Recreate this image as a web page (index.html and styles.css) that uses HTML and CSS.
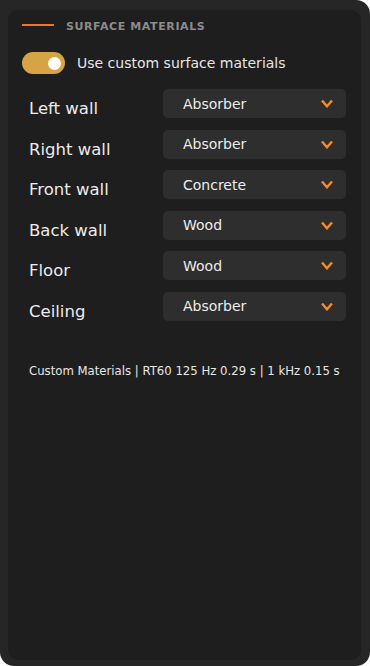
FILE: index.html
```html
<!DOCTYPE html>
<html lang="en">
<head>
    <meta charset="UTF-8">
    <meta name="viewport" content="width=device-width, initial-scale=1.0">
    <title>Surface Materials</title>
    <link rel="stylesheet" href="styles.css">
</head>
<body>
    <div class="app-frame">
        <div class="panel">
            <div class="panel-header">
                <span class="header-line"></span>
                <h2 class="header-title">SURFACE MATERIALS</h2>
            </div>

            <label class="toggle-row">
                <span class="toggle"><span class="toggle-knob"></span></span>
                <span class="toggle-text">Use custom surface materials</span>
            </label>

            <div class="material-list">
                <div class="material-row">
                    <span class="material-label">Left wall</span>
                    <div class="select-box"><span>Absorber</span><svg class="chevron" viewBox="0 0 12 9"><path d="M1 1.5 L6 7.2 L11 1.5"/></svg></div>
                </div>
                <div class="material-row">
                    <span class="material-label">Right wall</span>
                    <div class="select-box"><span>Absorber</span><svg class="chevron" viewBox="0 0 12 9"><path d="M1 1.5 L6 7.2 L11 1.5"/></svg></div>
                </div>
                <div class="material-row">
                    <span class="material-label">Front wall</span>
                    <div class="select-box"><span>Concrete</span><svg class="chevron" viewBox="0 0 12 9"><path d="M1 1.5 L6 7.2 L11 1.5"/></svg></div>
                </div>
                <div class="material-row">
                    <span class="material-label">Back wall</span>
                    <div class="select-box"><span>Wood</span><svg class="chevron" viewBox="0 0 12 9"><path d="M1 1.5 L6 7.2 L11 1.5"/></svg></div>
                </div>
                <div class="material-row">
                    <span class="material-label">Floor</span>
                    <div class="select-box"><span>Wood</span><svg class="chevron" viewBox="0 0 12 9"><path d="M1 1.5 L6 7.2 L11 1.5"/></svg></div>
                </div>
                <div class="material-row">
                    <span class="material-label">Ceiling</span>
                    <div class="select-box"><span>Absorber</span><svg class="chevron" viewBox="0 0 12 9"><path d="M1 1.5 L6 7.2 L11 1.5"/></svg></div>
                </div>
            </div>

            <p class="summary">Custom Materials | RT60 125 Hz 0.29 s | 1 kHz 0.15 s</p>
        </div>
    </div>
</body>
</html>
```

FILE: styles.css
```css
body {
    margin: 0;
    background-color: #ffffff;
    font-family: "DejaVu Sans", Verdana, sans-serif;
}
.app-frame {
    width: 370px;
    height: 666px;
    box-sizing: border-box;
    padding: 10px 9px 6px 8px;
    background-color: #262626;
    border-radius: 0 14px 14px 14px;
}
.panel {
    height: 100%;
    box-sizing: border-box;
    padding: 10px 15px 0 14px;
    background-color: #1e1e1e;
    border-radius: 10px;
}
.panel-header {
    display: flex;
    align-items: center;
    height: 12px;
}
.header-line {
    width: 32px;
    height: 2px;
    margin-top: -3px;
    background-color: #e8782c;
}
.header-title {
    margin: 0 0 0 12px;
    font-size: 11px;
    font-weight: bold;
    color: #8c8c8c;
    letter-spacing: 0.6px;
}
.toggle-row {
    display: flex;
    align-items: center;
    margin-top: 20px;
}
.toggle {
    display: flex;
    align-items: center;
    justify-content: flex-end;
    width: 43px;
    height: 22px;
    box-sizing: border-box;
    padding-right: 4px;
    border-radius: 11px;
    background-color: #d6a444;
}
.toggle-knob {
    width: 13px;
    height: 13px;
    border-radius: 50%;
    background-color: #ffffff;
}
.toggle-text {
    margin-left: 12px;
    font-size: 14px;
    color: #e6e6e6;
}
.material-list {
    display: flex;
    flex-direction: column;
    gap: 11.6px;
    margin-top: 15px;
}
.material-row {
    display: flex;
    align-items: center;
    justify-content: space-between;
    padding-left: 7px;
}
.material-label {
    padding-top: 10px;
    font-size: 16.5px;
    color: #ececec;
}
.select-box {
    display: flex;
    align-items: center;
    justify-content: space-between;
    width: 183px;
    height: 29px;
    box-sizing: border-box;
    padding: 0 13px 0 20px;
    background-color: #2e2e2e;
    border-radius: 5px;
    font-size: 14px;
    color: #ececec;
}
.chevron {
    width: 12px;
    height: 9px;
    fill: none;
    stroke: #f28a2e;
    stroke-width: 2.5;
}
.summary {
    margin: 42px 0 0 7px;
    font-family: "DejaVu Sans Condensed", "DejaVu Sans", sans-serif;
    font-size: 13px;
    color: #e6e6e6;
}
```
